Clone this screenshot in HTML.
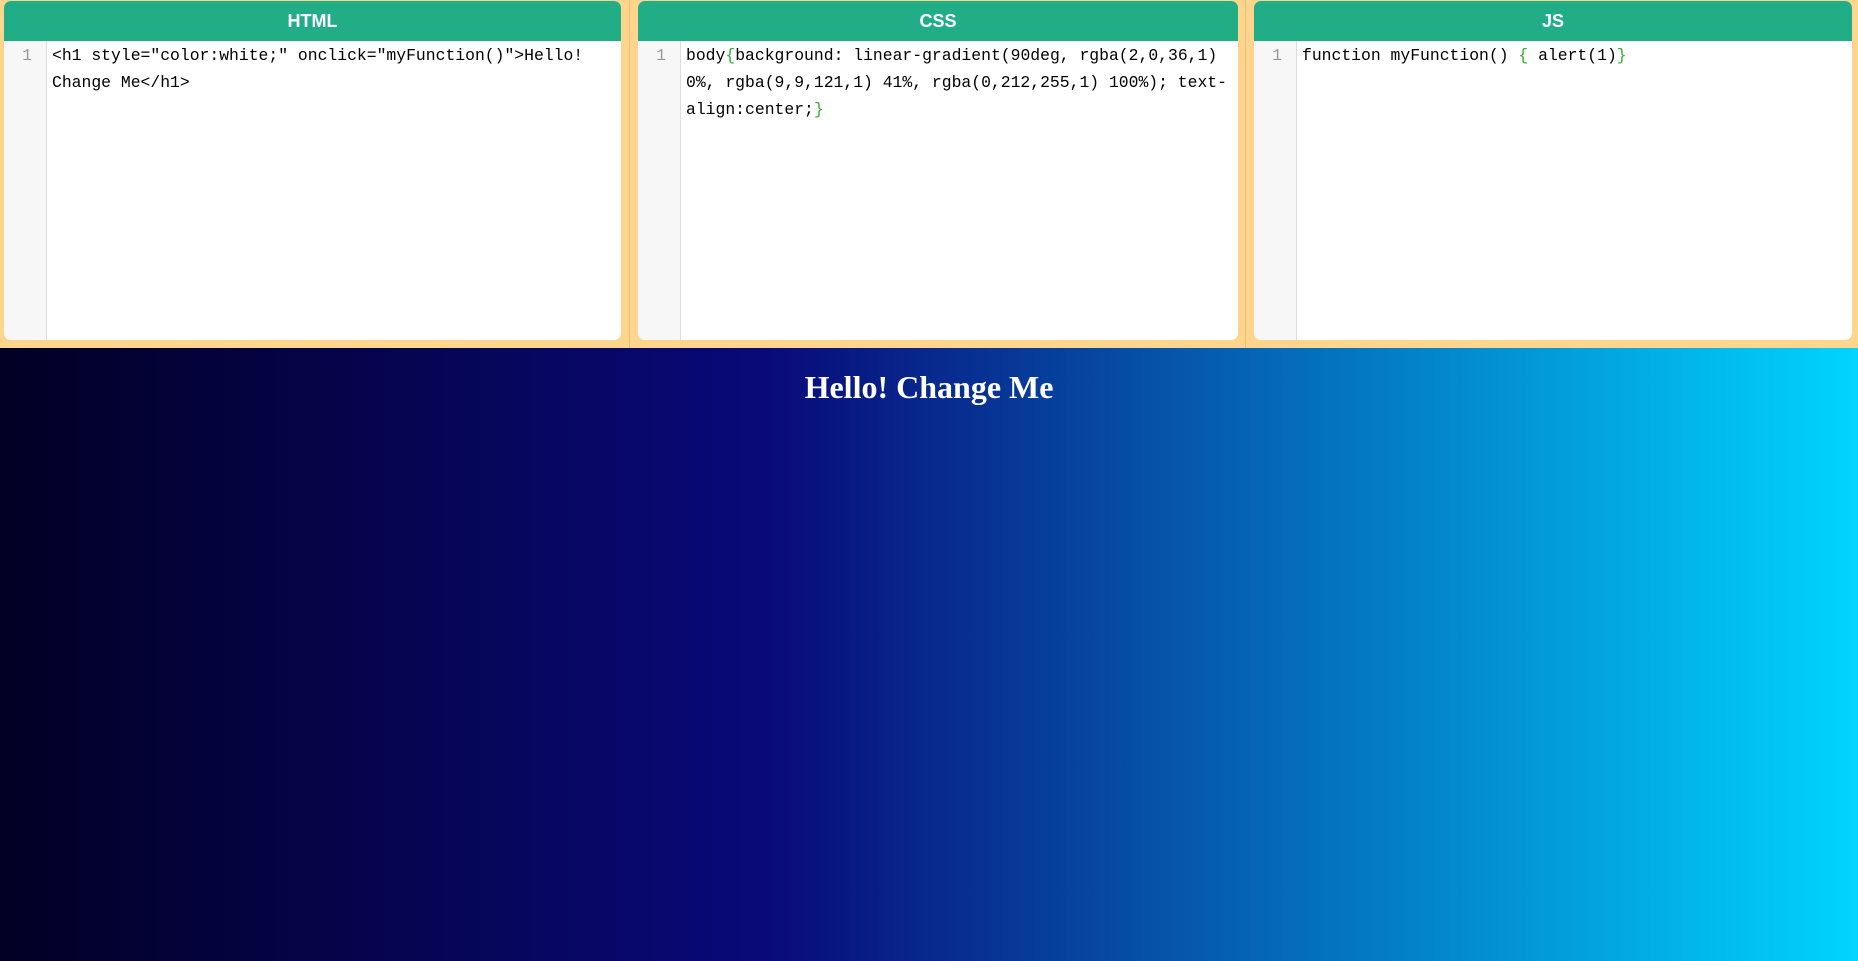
<!DOCTYPE html>
<html><head><meta charset="utf-8"><style>
html,body{margin:0;padding:0;}
body{width:1858px;height:961px;overflow:hidden;background:linear-gradient(90deg,rgba(2,0,36,1) 0%,rgba(9,9,121,1) 41%,rgba(0,212,255,1) 100%);text-align:center;position:relative;}
.top{position:absolute;left:0;top:0;width:1858px;height:348px;background:#fed58d;}
.div{position:absolute;top:0;height:348px;width:1px;background:#e8c07a;}
.panel{position:absolute;top:1px;height:339px;background:#fff;border-radius:7px;overflow:hidden;}
.hd{height:40px;background:#21ae87;color:#fff;font:bold 18px/40px "Liberation Sans",sans-serif;text-align:center;}
.gut{position:absolute;left:0;top:40px;bottom:0;width:42px;background:#f7f7f7;border-right:1px solid #ddd;color:#999;font:16.4px/27px "Liberation Mono",monospace;text-align:right;}
.gut span{display:block;padding:1px 14px 0 0;}
.code{position:absolute;left:48px;top:41px;right:6px;text-align:left;font:16.4px/27px "Liberation Mono",monospace;color:#000;white-space:pre;}
.g{color:#3a3}
h1{position:absolute;top:369px;left:0;width:1858px;margin:0;color:#fff;font:bold 32px/37px "Liberation Serif",serif;text-align:center;}
</style></head><body>
<div class="top"></div>
<div class="div" style="left:629px"></div>
<div class="div" style="left:1245px"></div>
<div class="panel" style="left:4px;width:617px"><div class="hd">HTML</div><div class="gut"><span>1</span></div><div class="code">&lt;h1 style="color:white;" onclick="myFunction()"&gt;Hello!
Change Me&lt;/h1&gt;</div></div>
<div class="panel" style="left:638px;width:600px"><div class="hd">CSS</div><div class="gut"><span>1</span></div><div class="code">body<span class="g">{</span>background: linear-gradient(90deg, rgba(2,0,36,1)
0%, rgba(9,9,121,1) 41%, rgba(0,212,255,1) 100%); text-
align:center;<span class="g">}</span></div></div>
<div class="panel" style="left:1254px;width:598px"><div class="hd">JS</div><div class="gut"><span>1</span></div><div class="code">function myFunction() <span class="g">{</span> alert(1)<span class="g">}</span></div></div>
<h1>Hello! Change Me</h1>
</body></html>
